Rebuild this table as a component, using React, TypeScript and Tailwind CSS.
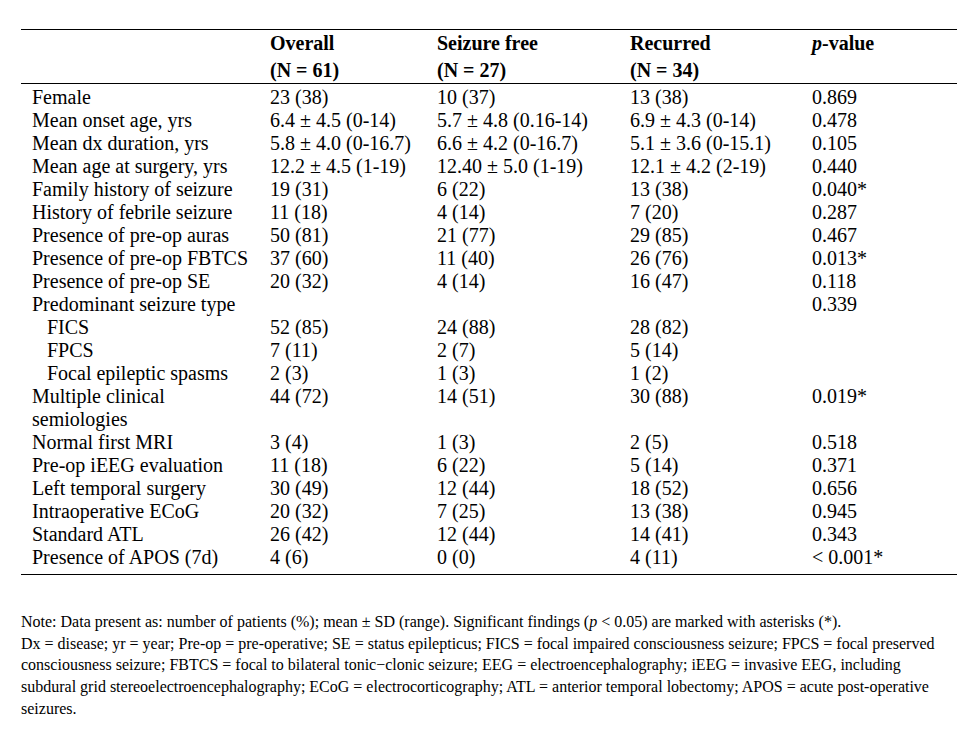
const rows: { label: string; indent?: boolean; cells: string[] }[] = [
  { label: "Female", cells: ["23 (38)", "10 (37)", "13 (38)", "0.869"] },
  { label: "Mean onset age, yrs", cells: ["6.4 ± 4.5 (0-14)", "5.7 ± 4.8 (0.16-14)", "6.9 ± 4.3 (0-14)", "0.478"] },
  { label: "Mean dx duration, yrs", cells: ["5.8 ± 4.0 (0-16.7)", "6.6 ± 4.2 (0-16.7)", "5.1 ± 3.6 (0-15.1)", "0.105"] },
  { label: "Mean age at surgery, yrs", cells: ["12.2 ± 4.5 (1-19)", "12.40 ± 5.0 (1-19)", "12.1 ± 4.2 (2-19)", "0.440"] },
  { label: "Family history of seizure", cells: ["19 (31)", "6 (22)", "13 (38)", "0.040*"] },
  { label: "History of febrile seizure", cells: ["11 (18)", "4 (14)", "7 (20)", "0.287"] },
  { label: "Presence of pre-op auras", cells: ["50 (81)", "21 (77)", "29 (85)", "0.467"] },
  { label: "Presence of pre-op FBTCS", cells: ["37 (60)", "11 (40)", "26 (76)", "0.013*"] },
  { label: "Presence of pre-op SE", cells: ["20 (32)", "4 (14)", "16 (47)", "0.118"] },
  { label: "Predominant seizure type", cells: ["", "", "", "0.339"] },
  { label: "FICS", indent: true, cells: ["52 (85)", "24 (88)", "28 (82)", ""] },
  { label: "FPCS", indent: true, cells: ["7 (11)", "2 (7)", "5 (14)", ""] },
  { label: "Focal epileptic spasms", indent: true, cells: ["2 (3)", "1 (3)", "1 (2)", ""] },
  { label: "Multiple clinical", cells: ["44 (72)", "14 (51)", "30 (88)", "0.019*"] },
  { label: "semiologies", cells: ["", "", "", ""] },
  { label: "Normal first MRI", cells: ["3 (4)", "1 (3)", "2 (5)", "0.518"] },
  { label: "Pre-op iEEG evaluation", cells: ["11 (18)", "6 (22)", "5 (14)", "0.371"] },
  { label: "Left temporal surgery", cells: ["30 (49)", "12 (44)", "18 (52)", "0.656"] },
  { label: "Intraoperative ECoG", cells: ["20 (32)", "7 (25)", "13 (38)", "0.945"] },
  { label: "Standard ATL", cells: ["26 (42)", "12 (44)", "14 (41)", "0.343"] },
  { label: "Presence of APOS (7d)", cells: ["4 (6)", "0 (0)", "4 (11)", "< 0.001*"] },
];

const cols = "grid grid-cols-[249px_167px_193px_182px_145px]";

export default function App() {
  return (
    <div className="min-h-screen bg-white text-black font-['Liberation_Serif','Times_New_Roman',serif]">
      <div className="w-[936px] ml-[21px] pt-[29px]">
        {/* Table */}
        <div className="border-t border-b border-black text-[20px]">
          <div className="border-b border-black font-bold leading-[26.5px]">
            <div className={cols}>
              <div />
              <div>Overall</div>
              <div>Seizure free</div>
              <div>Recurred</div>
              <div>
                <span className="italic">p</span>-value
              </div>
            </div>
            <div className={cols}>
              <div />
              <div>(N = 61)</div>
              <div>(N = 27)</div>
              <div>(N = 34)</div>
              <div />
            </div>
          </div>
          <div className="pt-[2px] pb-[5px] leading-[23px]">
            {rows.map((r, i) => (
              <div key={i} className={cols}>
                <div className={r.indent ? "pl-[26px]" : "pl-[11px]"}>{r.label}</div>
                {r.cells.map((c, j) => (
                  <div key={j} className="whitespace-nowrap">{c}</div>
                ))}
              </div>
            ))}
          </div>
        </div>

        {/* Notes */}
        <div className="mt-[36px] text-[16px] leading-[21.7px]">
          <p>
            Note: Data present as: number of patients (%); mean ± SD (range). Significant findings (
            <span className="italic">p</span> &lt; 0.05) are marked with asterisks (*).
          </p>
          <p>
            Dx = disease; yr = year; Pre-op = pre-operative; SE = status epilepticus; FICS = focal impaired
            consciousness seizure; FPCS = focal preserved consciousness seizure; FBTCS = focal to bilateral
            tonic−clonic seizure; EEG = electroencephalography; iEEG = invasive EEG, including subdural grid
            stereoelectroencephalography; ECoG = electrocorticography; ATL = anterior temporal lobectomy; APOS =
            acute post-operative seizures.
          </p>
        </div>
      </div>
    </div>
  );
}
